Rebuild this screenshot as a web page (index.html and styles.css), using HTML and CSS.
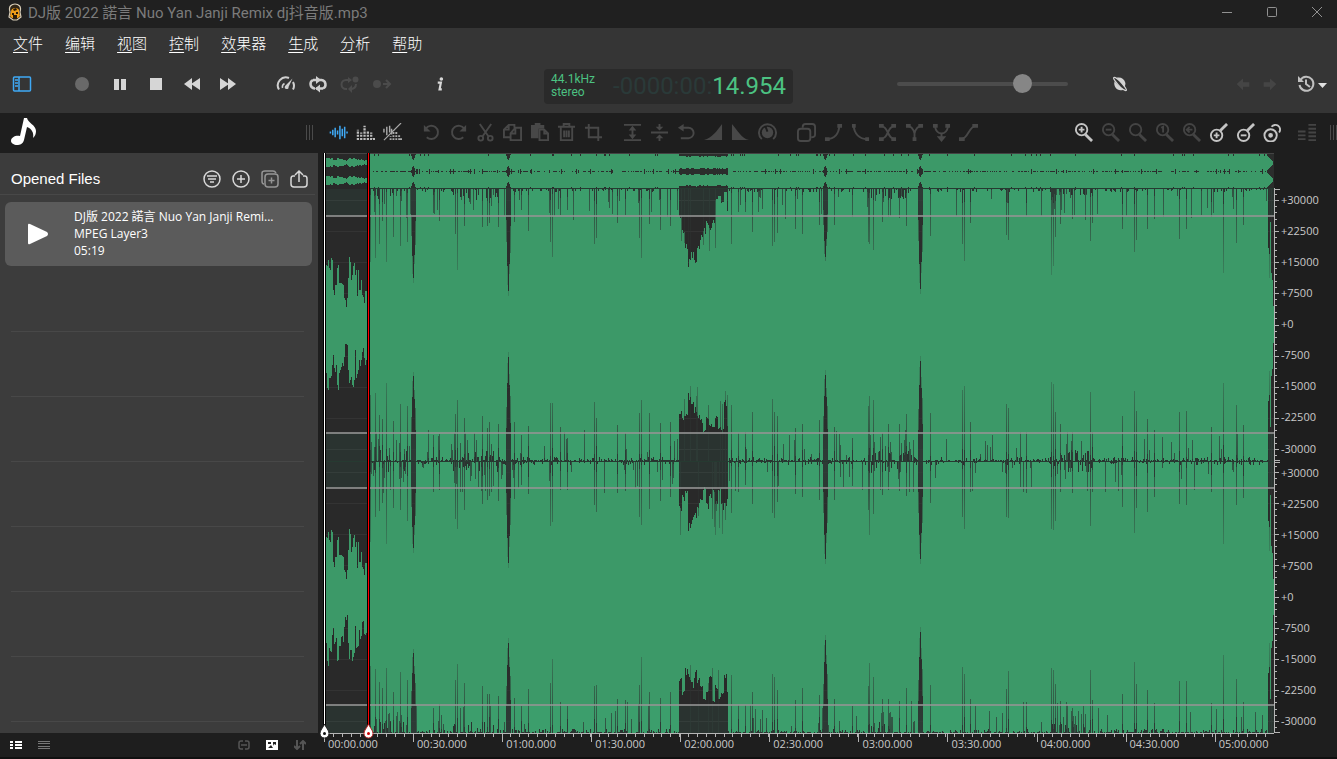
FILE: index.html
```html
<!DOCTYPE html>
<html lang="zh">
<head>
<meta charset="utf-8">
<meta name="viewport" content="width=device-width, initial-scale=1">
<title>DJ版 2022 諾言 Nuo Yan Janji Remix dj抖音版.mp3</title>
<link rel="stylesheet" href="styles.css">
</head>
<body>
<div class="app">
  <header class="titlebar">
    <svg class="logo" viewBox="0 0 16 18"><path d="M3 9C1 3 5 1 8 1s7 2 5 8l1 5-4 3H6l-4-3z" fill="#302516" stroke="#d8cdb8" stroke-width="1.2"/><path d="M4 9c0-3 2-4 4-4s5 1 4 4l1 4-2 2H5l-2-2z" fill="#ef9d18"/><path d="M6 6l3-1 1 2-3 1zM5 10h2v2H5zM9 9h2v2H9zM6 12l4 0v4H6z" fill="#2b1b0a"/></svg>
    <h1>DJ版 2022 諾言 Nuo Yan Janji Remix dj抖音版.mp3</h1>
    <div class="window-buttons">
      <button aria-label="Minimize"><svg viewBox="0 0 12 12"><path d="M1 6.500h10"/></svg></button>
      <button aria-label="Maximize"><svg viewBox="0 0 12 12"><rect x="1.500" y="1.500" width="9" height="9" rx="1"/></svg></button>
      <button aria-label="Close"><svg viewBox="0 0 12 12"><path d="M1 1l10 10M11 1L1 11"/></svg></button>
    </div>
  </header>

  <nav class="menubar">
    <button><u>文</u>件</button><button><u>编</u>辑</button><button><u>视</u>图</button><button><u>控</u>制</button><button><u>效</u>果器</button><button><u>生</u>成</button><button><u>分</u>析</button><button><u>帮</u>助</button>
  </nav>

  <section class="transport">
    <div class="transport-left">
      <button class="panel-toggle" aria-label="Toggle panel"><svg viewBox="0 0 20 16" fill="none" stroke="#3fa9f5" stroke-width="1.500"><rect x="1.500" y="1" width="17" height="14" rx="1"/><path d="M7 1v14M3 4h3M3 7h3M3 10h3"/></svg></button>
      <div class="group wide">
        <button aria-label="Record"><svg viewBox="0 0 20 20"><circle cx="10" cy="10" r="7" fill="#696969"/></svg></button>
        <button aria-label="Pause"><svg viewBox="0 0 20 20"><path d="M4 5h5v11H4zM11 5h5v11h-5z" fill="#d6d6d6"/></svg></button>
        <button aria-label="Stop"><svg viewBox="0 0 20 20"><path d="M4 4h12v12H4z" fill="#d6d6d6"/></svg></button>
        <button aria-label="Rewind"><svg viewBox="0 0 20 20"><path d="M2 10l8-6v12zM9 10l9-6v12z" fill="#d6d6d6"/></svg></button>
        <button aria-label="Forward"><svg viewBox="0 0 20 20"><path d="M18 10l-8-6v12zM11 10L2 4v12z" fill="#d6d6d6"/></svg></button>
      </div>
      <div class="group mid">
        <button aria-label="Speed"><svg viewBox="0 0 20 20" fill="none" stroke="#cfcfcf" stroke-width="2"><path d="M3 15.500A8 8 0 0 1 13 4M17 8A8 8 0 0 1 17 15.500"/><path d="M6.500 14a4 4 0 0 1 2-4.500" stroke-width="1.500"/><path d="M16.500 4.500L9 12q-1 3 1.500 3t2-2z" fill="#cfcfcf" stroke="none"/></svg></button>
        <button aria-label="Loop"><svg viewBox="0 0 20 20" fill="none" stroke="#cfcfcf" stroke-width="2.500"><path d="M7 14.500H6.500A4.500 4.500 0 0 1 5 6M9 6h4M11 14.500H8M13 6h.5A4.500 4.500 0 0 1 15 14.500"/><path d="M5 6h5M10 14.500h5"/><path d="M8 2v8l5-4zM12 10.500v8l-5-4z" fill="#cfcfcf" stroke="none"/></svg></button>
        <button aria-label="Loop once"><svg viewBox="0 0 20 20" fill="none" stroke="#4b4b4b" stroke-width="2"><path d="M7 15H6a4 4 0 0 1 0-9h4M16 10c0 4-3 5-6 5"/><path d="M8 3v6l4-3zM12 11v8l-4-4z" fill="#4b4b4b" stroke="none"/><circle cx="15.500" cy="5.500" r="3" fill="#4b4b4b" stroke="none"/></svg></button>
        <button aria-label="Play from marker"><svg viewBox="0 0 20 20"><circle cx="5" cy="10" r="4" fill="#4b4b4b"/><path d="M11 10h7M14 6l4 4-4 4" stroke="#4b4b4b" stroke-width="2" fill="none"/></svg></button>
      </div>
      <button class="info" aria-label="Info"><svg viewBox="0 0 20 20"><circle cx="11.500" cy="4.500" r="2" fill="#d8d8d8"/><path d="M7.500 8.500h3.500l-1.500 7.500h2.500" stroke="#d8d8d8" stroke-width="2.400" fill="none"/></svg></button>
    </div>
    <div class="lcd">
      <div class="format"><span>44.1kHz</span><span>stereo</span></div>
      <div class="time"><span class="ghost">-0000:00:</span><span>14.954</span></div>
    </div>
    <div class="transport-right">
      <input class="volume" type="range" min="0" max="100" value="76" aria-label="Volume">
      <button class="planet" aria-label="Effects"><svg viewBox="0 0 20 20"><path d="M6 3c5-1 9 1 10 6 0 1 0 3-1 4C12 9 9 6 6 3z" fill="#d4d4d4"/><path d="M4 7c3 4 6 7 10 9-3 2-7 1-9-2-1-2-2-4-1-7z" fill="#d4d4d4"/><path d="M3 3c1-1 6 2 9 6s6 7 5 8-6-2-9-6-6-7-5-8z" fill="none" stroke="#d4d4d4" stroke-width="1.500"/></svg></button>
      <div class="history">
        <button aria-label="Back"><svg viewBox="0 0 20 20"><path d="M3 10l7-6v4h7v5h-7v4z" fill="#454545"/></svg></button>
        <button aria-label="Next"><svg viewBox="0 0 20 20"><path d="M17 10l-7-6v4H3v5h7v4z" fill="#454545"/></svg></button>
        <button class="recent" aria-label="History"><svg viewBox="0 0 30 20"><path d="M3.500 6a7 7 0 1 1-1 5M9 5.500V10l4 3" stroke="#c0c0c0" stroke-width="2" fill="none"/><path d="M1 2v6h6z" fill="#c0c0c0"/><path d="M21 9h9l-4.500 5z" fill="#e0e0e0"/></svg></button>
      </div>
    </div>
  </section>

  <section class="tools">
    <div class="tab"><svg viewBox="0 0 25 28"><path d="M13 0h3c1 5 9 7 9 13 0 3-1 5-3 7 1-5-1-9-6-11l-3 13c-1 4-4 5-7 5s-6-2-6-4c0-4 5-6 9-5z" fill="#fff"/></svg></div>
    <i class="grip"></i>
    <div class="toolset">
      <div class="group small">
        <button aria-label="Waveform"><svg viewBox="0 0 20 20" stroke="#3fa9f5" stroke-width="1.600"><path d="M1.500 9v2M4 7v6M6.500 5v10M9 8v4M11.500 3v14M14 6v8M16.500 4v12M19 9v2"/></svg></button>
        <button aria-label="Spectrum"><svg viewBox="0 0 20 20" stroke="#bdbdbd" stroke-width="2.400" stroke-dasharray="2.200 1.200"><path d="M2 18V7M5.500 18V10M9 18V3M12.500 18V8M16 18v-8M19 18v-3"/></svg></button>
        <button aria-label="Combined view"><svg viewBox="0 0 20 20" stroke="#aaa" stroke-width="2"><path d="M1 6v4M4 4v9M7 3v7M9 12V6" stroke-width="1.500"/><path d="M8 18v-4M11 18V8M14 18V9M17 18v-5M19 18v-3" stroke-dasharray="2 1.200"/><path d="M19 0L1 18" stroke-width="1.200"/></svg></button>
      </div>
      <div class="group small dim">
        <button aria-label="Undo"><svg viewBox="0 0 20 20"><path d="M4 6a7 7 0 1 1 1 9"/><path d="M2 2v7h7z" class="solid"/></svg></button>
        <button aria-label="Redo"><svg viewBox="0 0 20 20"><path d="M16 6a7 7 0 1 0-1 9"/><path d="M18 2v7h-7z" class="solid"/></svg></button>
        <button aria-label="Cut"><svg viewBox="0 0 20 20"><path d="M4 1l9 13M16 1L7 14"/><circle cx="5" cy="16" r="2.500"/><circle cx="15" cy="16" r="2.500"/></svg></button>
        <button aria-label="Copy"><svg viewBox="0 0 20 20"><path d="M8 15H1V7l5-5h6v3M6 2v5H1M8 11l5-6h6v13H8zM13 5v6H8"/></svg></button>
        <button aria-label="Paste"><svg viewBox="0 0 20 20"><path d="M1 2h14v4H9v10H1z" class="solid"/><path d="M10 7h5l4 4v7h-9zM15 7v4h4M5 1h6"/></svg></button>
        <button aria-label="Delete"><svg viewBox="0 0 20 20"><path d="M1 4h18M7 4V1h6v3M4 4v14h12V4M7.500 8v7M12.500 8v7M10 8v7"/></svg></button>
        <button aria-label="Crop"><svg viewBox="0 0 20 20"><path d="M5 1v14h14M1 5h14v14"/></svg></button>
      </div>
      <div class="group small dim">
        <button aria-label="Normalize"><svg viewBox="0 0 20 20"><path d="M1 2h18M1 18h18M10 6v8"/><path d="M10 3l4 5H6zM10 17l4-5H6z" class="solid"/></svg></button>
        <button aria-label="Compress"><svg viewBox="0 0 20 20"><path d="M1 10h18M10 1v4M10 19v-4"/><path d="M10 8L6 4h8zM10 12l-4 4h8z" class="solid"/></svg></button>
        <button aria-label="Reverse"><svg viewBox="0 0 20 20"><path d="M6 5h6a5 5 0 0 1 0 11H4"/><path d="M1 5l6-4v8z" class="solid"/></svg></button>
        <button aria-label="Fade in"><svg viewBox="0 0 20 20"><path d="M0 18C9 15 13 9 19 1v17z" class="solid"/></svg></button>
        <button aria-label="Fade out"><svg viewBox="0 0 20 20"><path d="M19 18C11 16 7 8 1 1v17z" class="solid"/></svg></button>
        <button aria-label="Gain"><svg viewBox="0 0 20 20"><path d="M4 17a9 9 0 1 1 12 0"/><circle cx="10" cy="10" r="6" class="solid"/><path d="M10 9L8 4" stroke="#1e1e1e"/></svg></button>
      </div>
      <div class="group small dim">
        <button aria-label="Duplicate"><svg viewBox="0 0 20 20"><rect x="1" y="6" width="13" height="13" rx="3"/><path d="M6 5V4q0-3 3-3h7q3 0 3 3v8q0 3-4 3"/></svg></button>
        <button aria-label="Curve in"><svg viewBox="0 0 20 20"><path d="M3 17C11 17 16 11 16 3"/><path d="M1 15h5v4H1zM14 1h5v4h-5z" class="solid"/></svg></button>
        <button aria-label="Curve out"><svg viewBox="0 0 20 20"><path d="M3 3c0 8 6 14 14 14"/><path d="M1 1h4v4H1zM15 15h4v4h-4z" class="solid"/></svg></button>
        <button aria-label="Crossfade"><svg viewBox="0 0 20 20"><path d="M2 3c10 0 7 14 16 14M2 17C12 17 9 3 18 3"/><path d="M1 1h5v4H1zM14 1h5v4h-5zM1 15h5v4H1zM14 15h5v4h-5z" class="solid"/></svg></button>
        <button aria-label="Merge"><svg viewBox="0 0 20 20"><path d="M2 3c5 0 7 4 8 8v8M18 3c-5 0-7 4-8 8"/><path d="M1 1h5v4H1zM14 1h5v4h-5zM8 15h4v4H8z" class="solid"/></svg></button>
        <button aria-label="Mix"><svg viewBox="0 0 20 20"><path d="M3 3c1 6 4 8 7 8v6M17 3c-1 6-4 8-7 8"/><path d="M1 1h5v4H1zM14 1h5v4h-5zM10 20l-5-6h10z" class="solid"/></svg></button>
        <button aria-label="Smooth"><svg viewBox="0 0 20 20"><path d="M2 17c8 0 8-14 16-14"/><path d="M0 15h6v4H0zM14 1h6v4h-6z" class="solid"/></svg></button>
      </div>
    </div>
    <div class="toolset zooms">
      <div class="group small zoom-icons">
        <button aria-label="Zoom in"><svg viewBox="0 0 20 20"><circle cx="8" cy="7" r="6"/><path d="M12 12l7 7" stroke-width="3"/><path d="M5 7h6M8 4v6"/></svg></button>
        <button class="off" aria-label="Zoom out"><svg viewBox="0 0 20 20"><circle cx="8" cy="7" r="6"/><path d="M12 12l7 7" stroke-width="3"/><path d="M5 7h6"/></svg></button>
        <button class="off" aria-label="Zoom fit"><svg viewBox="0 0 20 20"><circle cx="8" cy="7" r="6"/><path d="M12 12l7 7" stroke-width="3"/></svg></button>
        <button class="off" aria-label="Zoom one to one"><svg viewBox="0 0 20 20"><circle cx="8" cy="7" r="6"/><path d="M12 12l7 7" stroke-width="3"/><path d="M6.500 5l2-1v6"/></svg></button>
        <button class="off" aria-label="Zoom back"><svg viewBox="0 0 20 20"><circle cx="8" cy="7" r="6"/><path d="M12 12l7 7" stroke-width="3"/><path d="M5 7h6M8 4L5 7l3 3"/></svg></button>
        <button aria-label="Vertical zoom in"><svg viewBox="0 0 20 20"><circle cx="8" cy="13" r="6"/><path d="M12 8l7-7" stroke-width="3"/><path d="M5 13h6M8 10v6"/></svg></button>
        <button aria-label="Vertical zoom out"><svg viewBox="0 0 20 20"><circle cx="8" cy="13" r="6"/><path d="M12 8l7-7" stroke-width="3"/><path d="M5 13h6"/></svg></button>
        <button aria-label="Vertical zoom reset"><svg viewBox="0 0 20 20"><circle cx="8" cy="13" r="6.500"/><path d="M9 4a5 5 0 1 1 8 6"/><circle cx="8" cy="13" r="1.500" fill="#c4c4c4"/></svg></button>
      </div>
      <button class="levels" aria-label="Levels"><svg viewBox="0 0 20 20"><path d="M1 9h8M1 13h8M1 17h8M12 2h8M12 6h8M12 10h8M12 14h8M12 18h8" stroke="#444" stroke-width="2"/></svg></button>
    </div>
    <i class="grip end"></i>
  </section>

  <main class="workspace">
    <aside class="files">
      <div class="files-head">
        <h2>Opened Files</h2>
        <button aria-label="Filter"><svg viewBox="0 0 20 20"><circle cx="10" cy="10" r="8"/><path d="M5 7h10M6 10h8M8 13h4"/></svg></button>
        <button aria-label="Add"><svg viewBox="0 0 20 20"><circle cx="10" cy="10" r="8"/><path d="M6 10h8M10 6v8"/></svg></button>
        <button class="faded" aria-label="Add copy"><svg viewBox="0 0 20 20"><rect x="5" y="5" width="13" height="13" rx="3"/><path d="M4 15q-2 0-2-3V4q0-2 3-2h8q2 0 3 2M8.500 11.500h6M11.500 8.500v6"/></svg></button>
        <button aria-label="Share"><svg viewBox="0 0 20 20"><path d="M6 7H4Q2 7 2 10v5q0 3 3 3h10q3 0 3-3v-5q0-3-2-3h-2M10 13V2M6 6l4-4 4 4"/></svg></button>
      </div>
      <ul class="file-list">
        <li class="file">
          <button class="play" aria-label="Play"><svg viewBox="0 0 22 22"><path d="M1 2q0-2 2-1l17 8q2 2 0 4L3 21q-2 1-2-1z" fill="#fff"/></svg></button>
          <div class="file-text"><strong>DJ版 2022 諾言 Nuo Yan Janji Remi...</strong><span>MPEG Layer3</span><span>05:19</span></div>
        </li>
        <li class="empty"></li><li class="empty"></li><li class="empty"></li><li class="empty"></li><li class="empty"></li><li class="empty"></li><li class="empty"></li>
      </ul>
    </aside>
    <section class="wave">
      <svg class="canvas" id="wave" viewBox="0 0 950 580" preserveAspectRatio="none" shape-rendering="crispEdges"></svg>
      <div class="cursor start"><svg viewBox="0 0 11 16"><path d="M5.500 1C7 5 10 7 10 10.500a4.500 4.500 0 0 1-9 0C1 7 4 5 5.500 1z" fill="#fff" stroke="#222"/><circle cx="5.500" cy="10.500" r="1.500" fill="#111"/></svg></div>
      <div class="cursor now" id="now"><svg viewBox="0 0 11 16"><path d="M5.500 1C7 5 10 7 10 10.500a4.500 4.500 0 0 1-9 0C1 7 4 5 5.500 1z" fill="#fff" stroke="#b22"/><circle cx="5.500" cy="10.500" r="1.500" fill="#c00"/></svg></div>
    </section>
    <section class="scale">
      <svg class="scale-ticks" id="ticks" viewBox="0 0 16 580" preserveAspectRatio="none" shape-rendering="crispEdges"></svg>
      <ol><li>+30000</li><li>+22500</li><li>+15000</li><li>+7500</li><li>+0</li><li>-7500</li><li>-15000</li><li>-22500</li><li>-30000</li></ol>
      <ol><li>+30000</li><li>+22500</li><li>+15000</li><li>+7500</li><li>+0</li><li>-7500</li><li>-15000</li><li>-22500</li><li>-30000</li></ol>
    </section>
  </main>

  <footer class="bottom">
    <div class="files-foot">
      <button aria-label="Detailed list"><svg viewBox="0 0 12 10" stroke="#fff" stroke-width="2"><path d="M0 2h3M5 2h7M0 5h3M5 5h7M0 8h3M5 8h7"/></svg></button>
      <button aria-label="Compact list"><svg viewBox="0 0 12 10" stroke="#777"><path d="M0 1.500h12M0 3.500h12M0 6.500h12M0 8.500h12"/></svg></button>
      <span class="spacer"></span>
      <button aria-label="Link"><svg viewBox="0 0 12 10" stroke="#555" stroke-width="1.500" fill="none"><path d="M5 1H3Q1 1 1 3v4q0 2 2 2h2M7 1h2q2 0 2 2v4q0 2-2 2H7M3 5h6"/></svg></button>
      <button aria-label="Preview"><svg viewBox="0 0 12 10"><rect width="12" height="10" fill="#fff"/><path d="M2 2h3v2H2zM7 2h3v3L8 4 7 6zM2 8l3-3 2 3z" fill="#222"/></svg></button>
      <button aria-label="Sort"><svg viewBox="0 0 12 10" stroke="#555" stroke-width="2" fill="none"><path d="M3 0v8M0 6l3 3 3-3M9 10V2M6 4l3-3 3 3"/></svg></button>
    </div>
    <ol class="timeline">
      <li>00:00.000</li><li>00:30.000</li><li>01:00.000</li><li>01:30.000</li><li>02:00.000</li><li>02:30.000</li><li>03:00.000</li><li>03:30.000</li><li>04:00.000</li><li>04:30.000</li><li>05:00.000</li>
    </ol>
  </footer>
</div>
<script src="wave.js"></script>
</body>
</html>
```

FILE: styles.css
```css
* { box-sizing: border-box; }
body { margin: 0; background: #1e1e1e; color: #fff; font-family: "Open Sans", "Noto Sans", "Noto Sans CJK SC", sans-serif; }
button { appearance: none; border: 0; background: none; color: inherit; font: inherit; padding: 0; margin: 0; display: flex; align-items: center; justify-content: center; }
svg { display: block; flex: none; }
ul, ol { list-style: none; margin: 0; padding: 0; }
h1, h2 { margin: 0; font-weight: 400; }

.app { height: 100vh; display: grid; grid-template-rows: 28px 33px 52px 40px minmax(0, 1fr) 26px; overflow: hidden; }

.titlebar { display: flex; align-items: center; background: #202020; padding-left: 7px; }
.logo { width: 16px; height: 18px; margin: 0 5px 4px 0; }
.titlebar h1 { flex: 1; font-family: Roboto, "Noto Sans CJK SC", sans-serif; font-size: 15px; line-height: 20px; color: #7b7b7b; padding-bottom: 3px; }
.window-buttons { display: flex; padding-bottom: 4px; }
.window-buttons button { width: 45px; height: 24px; padding-left: 4px; }
.window-buttons svg { width: 12px; height: 12px; fill: none; stroke: #919191; }

.menubar { display: flex; gap: 22px; padding: 0 13px 4px; background: #353535; align-items: center; font-family: "Noto Sans CJK SC", sans-serif; font-size: 15px; font-weight: 300; line-height: 24px; }
.menubar u { text-underline-offset: 3px; }

.transport { display: grid; grid-template-columns: 1fr auto 1fr; align-items: center; background: #353535; padding-bottom: 6px; }
.transport-left, .transport-right, .group, .history { display: flex; align-items: center; }
.transport-left { padding-left: 6px; }
.panel-toggle { width: 32px; margin-right: 26px; }
.transport-left svg, .transport-right svg { width: 18px; height: 18px; }
.transport-left .panel-toggle svg { width: 20px; height: 16px; }
.wide button { width: 36px; }
.wide button:first-child { margin-right: 2px; }
.wide { margin-right: 24px; }
.mid button { width: 32px; }
.info { width: 32px; margin-left: 26px; }
.transport-left .wide svg, .transport-left .mid svg { width: 20px; height: 20px; }

.lcd { width: 249px; height: 35px; display: flex; align-items: center; justify-content: space-between; padding: 0 7px; border-radius: 4px; background: #2a2a2a; color: #4cc282; margin-top: 4px; }
.format { display: flex; flex-direction: column; font-family: Roboto, sans-serif; font-size: 12px; line-height: 13px; }
.time { font-family: Roboto, sans-serif; font-size: 24px; line-height: 34px; white-space: nowrap; }
.ghost { color: #2a3a39; }

.volume { appearance: none; width: 171px; height: 20px; margin: 0 0 0 104px; background: none; }
.volume::-webkit-slider-runnable-track { height: 4px; border-radius: 2px; background: #4c4c4c; }
.volume::-webkit-slider-thumb { appearance: none; width: 19px; height: 19px; border-radius: 50%; background: #868686; margin-top: -8px; }
.planet { width: 32px; margin-left: 36px; }
.history { margin-left: auto; padding-right: 10px; }
.history button { width: 27px; }
.history .recent { width: 30px; margin-left: 14px; }
.transport-right .recent svg { width: 30px; height: 20px; }
.history svg { width: 18px; height: 18px; }

.tools { display: flex; align-items: center; padding-bottom: 2px; }
.tab { width: 306px; padding-left: 11px; }
.tab svg { width: 25px; height: 28px; }
.grip { width: 7px; height: 15px; background: repeating-linear-gradient(90deg, #4a4a4a 0 1px, transparent 1px 3px); }
.toolset { display: flex; gap: 12px; margin-left: 12px; }
.zooms { gap: 7px; margin-left: auto; margin-right: 10px; }
.small button, .levels { width: 27px; height: 30px; }
.small svg, .levels svg { width: 19px; height: 19px; }
.dim svg { fill: none; stroke: #484848; stroke-width: 2; }
.dim .solid { fill: #484848; stroke: none; }
.zoom-icons svg { fill: none; stroke: #c4c4c4; stroke-width: 2; }
.zoom-icons .off svg { stroke: #444; }

.workspace { display: grid; grid-template-columns: 318px minmax(0, 1fr) 63px; min-height: 0; }
.files { min-height: 0; overflow: hidden; background: #3c3c3c; display: flex; flex-direction: column; }
.files-head { display: flex; align-items: center; gap: 9px; padding: 10px 6px 0 11px; height: 42px; flex: none; border-bottom: 1px solid #484848; margin-right: 3px; }
.files-head h2 { flex: 1; font-family: "Liberation Sans", sans-serif; font-size: 15px; line-height: 20px; }
.files-head button { width: 20px; }
.files-head svg { width: 20px; height: 20px; fill: none; stroke: #d8d8d8; stroke-width: 1.5; }
.files-head .faded svg { stroke: #959595; }
.file-list { padding: 7px 6px 0 5px; }
.file { height: 64px; display: flex; align-items: center; gap: 24px; padding: 0 24px 2px 21px; background: #5b5b5b; border-radius: 6px; margin-bottom: 1px; }
.play svg { width: 24px; height: 22px; margin-top: 2px; }
.file-text { min-width: 0; font-size: 12px; line-height: 17px; display: flex; flex-direction: column; }
.file-text strong { font-weight: 400; white-space: nowrap; }
.empty { height: 65px; border-bottom: 1px solid #484848; margin: 0 8px 0 6px; }

.wave { position: relative; min-height: 0; margin-left: 6px; }
.canvas { width: 100%; height: 100%; }
.cursor { position: absolute; top: 0; bottom: 0; width: 3px; margin-left: -1px; }
.cursor.start { left: 0; background: linear-gradient(90deg, #000 1px, #fff 1px 2px, #000 2px); }
.cursor.now { background: linear-gradient(90deg, #000 1px, #f00 1px 2px, #000 2px); }
.cursor svg { position: absolute; bottom: -6px; left: -4px; width: 11px; height: 16px; z-index: 2; }

.scale { position: relative; display: grid; grid-template-rows: 1fr 1fr; padding-top: 35px; font-size: 11px; }
.scale ol { display: flex; flex-direction: column; justify-content: space-between; padding-left: 7px; }
.scale li { line-height: 24px; color: #c9c9c9; }
.scale-ticks { position: absolute; left: 0; top: 0; width: 16px; height: 100%; }

.bottom { display: grid; grid-template-columns: 318px minmax(0, 1fr); border-bottom: 2px solid #101010; }
.files-foot { display: flex; align-items: center; gap: 16px; padding: 0 12px 0 10px; }
.files-foot button { width: 12px; height: 20px; }
.files-foot svg { width: 12px; height: 10px; }
.spacer { flex: 1; }
.timeline { margin: 0 63px 0 6px; display: grid; grid-template-columns: repeat(10, 30fr) 20fr; background: repeating-linear-gradient(90deg, #b5b5b5 0 1px, transparent 1px calc(100% / 107)) top / 100% 3px no-repeat; border-top: 1px solid #b5b5b5; }
.timeline li { min-width: 0; font-size: 11px; line-height: 14px; padding: 3px 0 0 4px; color: #c9c9c9; white-space: nowrap; background: linear-gradient(#b5b5b5, #b5b5b5) left top / 1px 8px no-repeat; }
```

FILE: wave.js
```js
(function () {
  var W = 950, X0 = 324, Y0 = 153;
  var seed = 7;
  function rnd() { seed = (seed * 16807) % 2147483647; return seed / 2147483647; }
  function col(x, a, b) { return b > a ? 'M' + x + ' ' + a.toFixed(1) + 'h1V' + b.toFixed(1) + 'h-1z' : ''; }

  // Channel edges: position and inward direction.
  var edges = [{ y: 35, d: 1 }, { y: 308, d: -1 }, { y: 308, d: 1 }, { y: 580, d: -1 }];
  edges.forEach(function (e) { e.solid = new Array(W + 1).fill(0); e.thin = new Array(W + 1).fill(0); });

  // Transient gaps as x and depth.
  var spikes = [370,78,375,73,379,55,382,44,386,79,393,47,400,59,407,62,433,32,439,33,455,57,457,82,464,48,482,46,487,43,489,43,498,45,514,38,521,27,528,43,550,66,552,73,560,35,567,28,594,58,596,56,617,36,625,35,639,59,641,73,649,47,660,47,670,46,731,61,738,30,745,28,752,49,772,62,774,55,777,43,795,41,802,44,819,48,834,40,852,28,868,60,869,74,873,66,882,35,888,36,899,38,906,45,930,48,962,72,964,74,970,38,1006,55,1008,65,1026,34,1051,84,1053,75,1055,57,1060,41,1072,32,1090,66,1092,36,1122,48,1134,71,1136,58,1147,49,1154,37,1179,51,1186,53,1211,38,1223,82,1236,57,1243,38];
  var gaps = [[413, 95, 89, 92, 84], [508, 108, 109, 107, 95], [825, 73, 91, 103, 98], [920, 106, 105, 103, 106]];
  // Quiet passage between 679 and 731, four edges, one value every 3px.
  var quiet = [
    [30,46,60,78,66,72,60,50,44,36,40,34,12,8,14,4,22,30],
    [49,44,46,66,58,53,46,42,30,46,38,34,45,34,30,60,34,30],
    [48,38,30,68,62,56,46,38,28,46,36,30,42,30,46,44,42,18],
    [52,42,64,58,50,60,54,48,36,44,62,34,48,36,42,58,40,22]
  ];
  edges.forEach(function (e, k) {
    for (var x = 369; x < 1268; x++) {
      var i = x - X0;
      var busy = (x < 408) || (x > 452 && x < 500) || (x > 866 && x < 914) || (x > 1050 && x < 1093);
      var r = rnd();
      e.solid[i] = r < 0.65 ? rnd() * 1 : rnd() * (busy ? 12 : 4);
      if (rnd() < (busy ? 0.22 : 0.07)) e.thin[i] = 6 + rnd() * 26;
    }
    for (var s = 0; s < spikes.length; s += 2) {
      e.thin[spikes[s] - X0] = spikes[s + 1] * (0.75 + rnd() * 0.3);
      e.solid[spikes[s] - X0] = 4 + rnd() * 12;
    }
    gaps.forEach(function (g) {
      var h = g[k + 1], at = g[0] - X0;
      [0.3, 0.72, 0.95, 0.7, 0.35].forEach(function (f, j) { e.solid[at + j - 2] = h * f; });
      e.thin[at] = h; e.thin[at - 1] = h * 0.9; e.thin[at + 1] = h * 0.8; e.thin[at - 2] = h * 0.5; e.thin[at + 2] = h * 0.6;
    });
    for (var q = 0; q < 49; q++) {
      e.thin[679 - X0 + q] = 0;
      e.solid[679 - X0 + q] = quiet[k][Math.floor(q / 3)] * (0.9 + rnd() * 0.16);
      if (rnd() < 0.15) e.thin[679 - X0 + q] = 50 + rnd() * 25;
    }
    for (var z = 1268; z <= 1274; z++) {
      e.solid[z - X0] = [60, 66, 34, 85, 92, 118, 136][z - 1268];
    }
    e.thin[945] = 90; e.thin[947] = 85;
  });

  var green = '';
  for (var c = 0; c < 2; c++) {
    var a = edges[c * 2], b = edges[c * 2 + 1];
    for (var x = 46; x < W; x++) green += col(x, a.y + a.solid[x], b.y - b.solid[x]);
  }
  var introTop = [265,266,260,268,270,258,260,290,295,285,285,268,265,283,283,283,284,285,298,300,307,298,278,257,262,280,275,266,263,275,270,296,270,290,290,280,295,297,303,291,291];
  var introLow = [373,388,390,378,378,376,365,355,368,372,365,385,390,373,370,367,363,366,357,344,344,345,370,383,380,377,385,387,380,350,378,374,370,360,366,360,352,348,358,365,360];
  introTop.forEach(function (t, i) {
    green += col(i + 2, t - Y0, introLow[i] - Y0) + col(i + 2, t - Y0 + 272, introLow[i] - Y0 + 270 + (i % 3) * 3);
    var h = (325 - t) / 16;
    green += col(i + 2, 9 - h, 10 + h) + col(i + 2, 27 - h, 28 + h);
  });

  // Overview strip.
  var dark = '';
  for (var v = 46; v < W; v++) {
    var m = v > 354 && v < 404;
    var w = m ? 1.5 + rnd() * 2 : (rnd() < 0.5 ? 0.2 : -1) + (rnd() < 0.07 ? 2 : 0);
    dark += col(v, 18 - w, 19 + w);
    var o = m ? 1.5 + rnd() * 1.5 : (rnd() < 0.08 ? 1.5 : 0);
    dark += col(v, 1, 1 + o) + col(v, 35 - o, 35);
  }
  gaps.forEach(function (g) {
    [2, 5, 6, 4, 1].forEach(function (w, j) {
      var at = g[0] - X0 + j - 2;
      dark += col(at, 18 - w + 1, 18 + w) + col(at, 1, 1 + w) + col(at, 35 - w, 35);
    });
  });
  for (var t = 943; t < 950; t++) {
    var n = t - 942;
    dark += col(t, 1, 2 + n) + col(t, 18 - n, 19 + n) + col(t, 35 - n, 35);
  }

  var grads = '', fades = '';
  edges.forEach(function (e, k) {
    grads += '<linearGradient id="f' + k + '" gradientUnits="userSpaceOnUse" x1="0" x2="0" y1="' + e.y + '" y2="' + (e.y + e.d * 90) + '"><stop offset="0" stop-color="#2d3230" stop-opacity=".8"/><stop offset="1" stop-color="#2d3230" stop-opacity=".22"/></linearGradient>';
    var p = '';
    e.thin.forEach(function (h, x) { if (h) p += e.d > 0 ? col(x, e.y, e.y + h) : col(x, e.y - h, e.y); });
    fades += '<path fill="url(#f' + k + ')" d="' + p + '"/>';
  });

  var levels = [47, 78, 109, 140, 172, 203, 234, 265, 296], grid = '';
  levels.forEach(function (y) { grid += 'M2 ' + y + '.5H950M2 ' + (y + 272) + '.5H950'; });
  document.getElementById('wave').innerHTML =
    '<defs>' + grads + '</defs><rect width="950" height="580" fill="#292929"/>' +
    '<path stroke="#333" d="' + grid + '"/>' +
    '<path fill="#3c9968" d="M46 1H949V35H46z"/><path fill="#3c9968" d="' + green + '"/>' + fades +
    '<path fill="#2b2d2c" d="' + dark + '"/>' +
    '<path fill="#50ffc0" fill-opacity=".05" d="M2 36H950V63H2zM2 280H950V335H2zM2 552H950V580H2z"/>' +
    '<path stroke="#444" d="M0 .5H950"/><path stroke="#263a31" d="M46 35.5H950M2 308.5H950"/>' +
    '<path fill="#949494" fill-opacity=".8" d="M2 62H950V64H2zM2 279H950V281H2zM2 334H950V336H2zM2 551H950V553H2z"/>';

  var ticks = 'M.5 35V580M0 36.5H6M0 307.5H6M0 309.5H6M0 579.5H6';
  levels.forEach(function (y, i) {
    [0, 272].forEach(function (o) {
      ticks += 'M0 ' + (y + o) + '.5H5';
      for (var j = 1; j < 5 && i < 8; j++) ticks += 'M0 ' + (Math.round(y + o + j * 6.22)) + '.5H3';
      if (!i) ticks += 'M0 ' + (y + o - 6) + '.5H3';
      if (i === 8) ticks += 'M0 ' + (y + o + 6) + '.5H3';
    });
  });
  document.getElementById('ticks').innerHTML = '<path fill="none" stroke="#b5b5b5" d="' + ticks + '"/>';

  document.getElementById('now').style.left = (14.954 / 319.5 * 100) + '%';
})();
```
